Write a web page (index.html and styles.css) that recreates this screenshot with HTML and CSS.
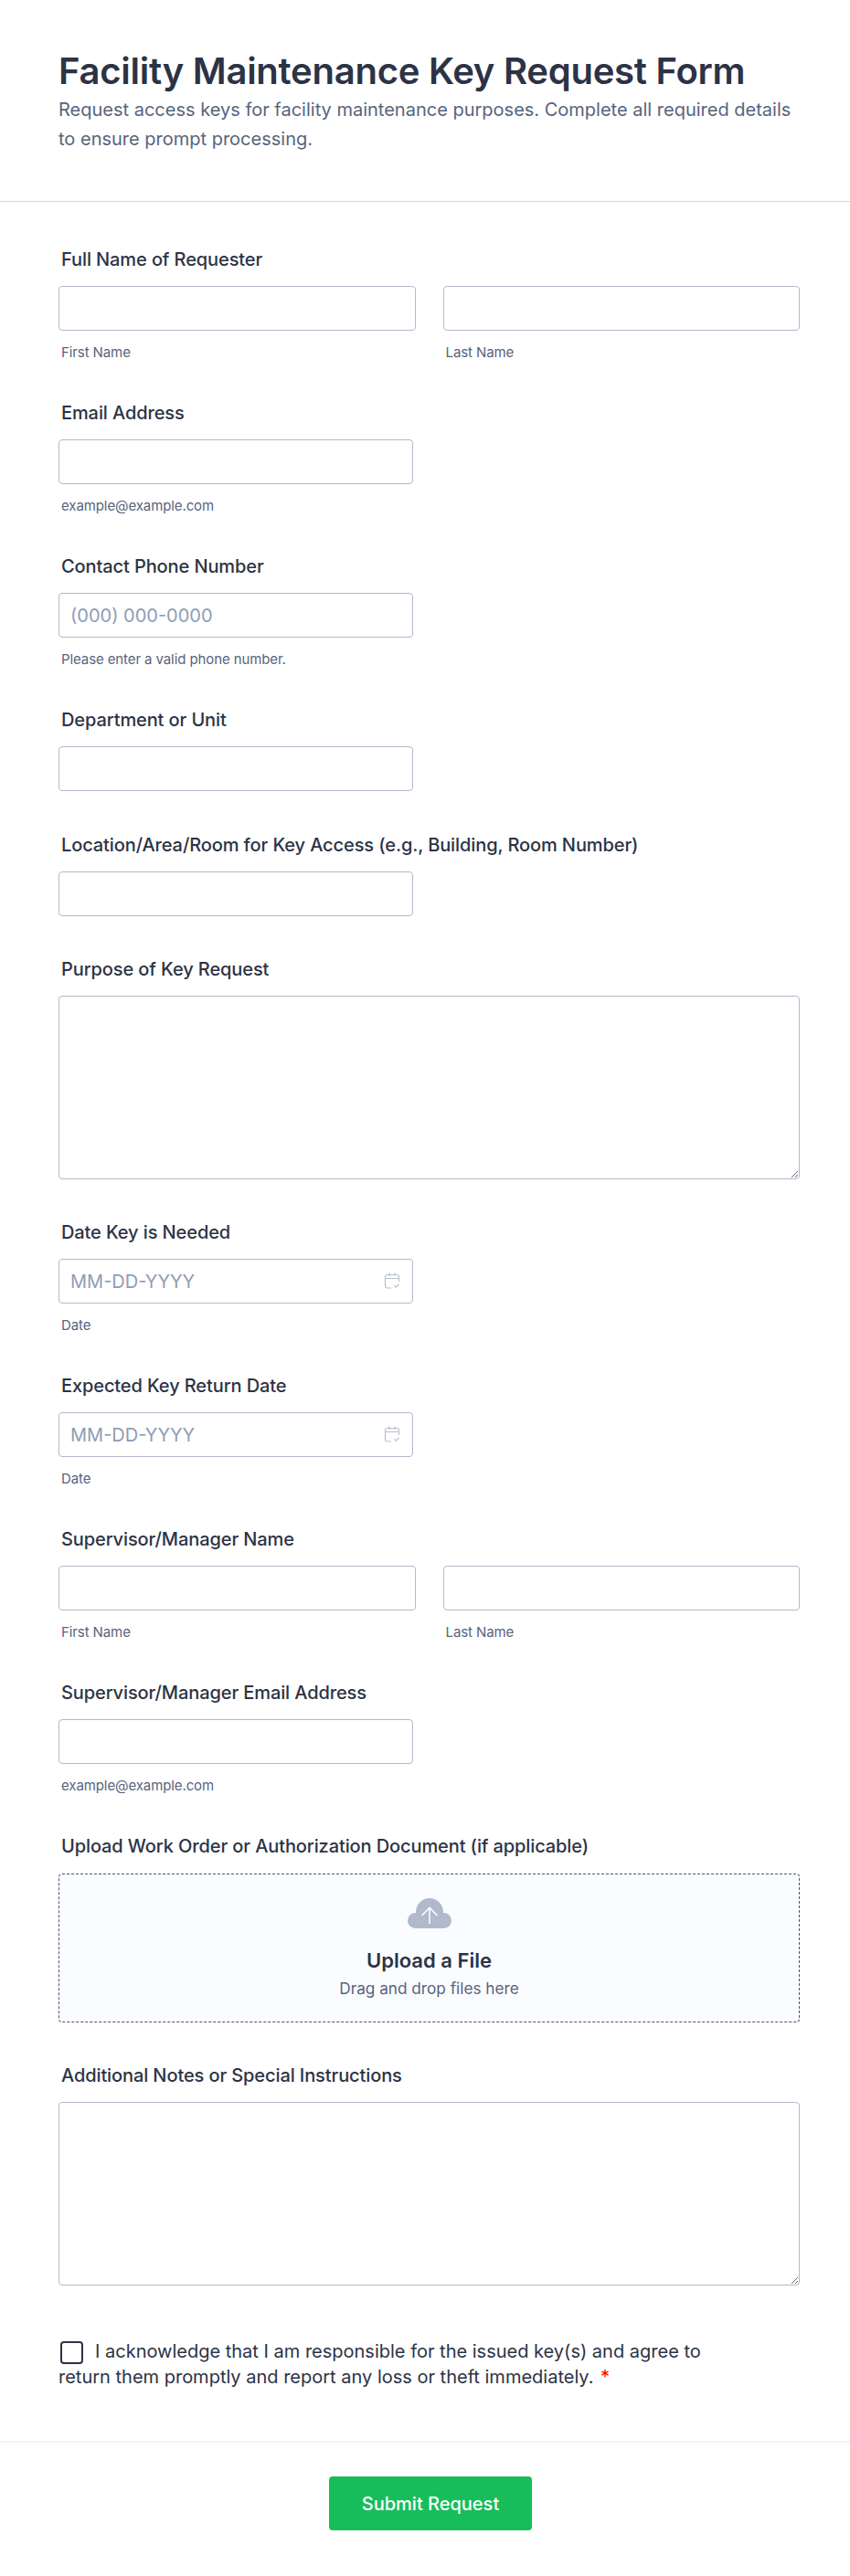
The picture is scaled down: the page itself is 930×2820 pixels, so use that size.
FILE: index.html
```html
<!DOCTYPE html>
<html lang="en">
<head>
  <meta charset="UTF-8">
  <meta name="viewport" content="width=device-width, initial-scale=1.0">
  <title>Facility Maintenance Key Request Form</title>
  <link rel="stylesheet" href="styles.css">
</head>
<body>
  <div class="form">
    <div class="form-header">
      <h1>Facility Maintenance Key Request Form</h1>
      <p>Request access keys for facility maintenance purposes. Complete all required details to ensure prompt processing.</p>
    </div>

    <div class="form-body">
      <div class="field">
        <label>Full Name of Requester</label>
        <div class="row">
          <div class="col">
            <input type="text">
            <span class="sub">First Name</span>
          </div>
          <div class="col">
            <input type="text">
            <span class="sub">Last Name</span>
          </div>
        </div>
      </div>

      <div class="field">
        <label>Email Address</label>
        <input type="text" class="half">
        <span class="sub">example@example.com</span>
      </div>

      <div class="field">
        <label>Contact Phone Number</label>
        <input type="text" class="half" placeholder="(000) 000-0000">
        <span class="sub">Please enter a valid phone number.</span>
      </div>

      <div class="field">
        <label>Department or Unit</label>
        <input type="text" class="half">
      </div>

      <div class="field">
        <label>Location/Area/Room for Key Access (e.g., Building, Room Number)</label>
        <input type="text" class="half">
      </div>

      <div class="field">
        <label>Purpose of Key Request</label>
        <textarea></textarea>
      </div>

      <div class="field">
        <label>Date Key is Needed</label>
        <div class="date half">
          <input type="text" placeholder="MM-DD-YYYY">
          <svg class="cal" width="18" height="18" viewBox="0 0 18 18" fill="none" stroke="#b8bfcf" stroke-width="1.2">
            <path d="M8 17H3.5A2 2 0 0 1 1.5 15V4.5A2 2 0 0 1 3.5 2.5H14.5A2 2 0 0 1 16.5 4.5V10"/>
            <path d="M1.5 6.5H16.5M6 0.5V4M12 0.5V4"/>
            <path d="M11.5 14.5L13.2 16.2L16.5 13"/>
          </svg>
        </div>
        <span class="sub">Date</span>
      </div>

      <div class="field">
        <label>Expected Key Return Date</label>
        <div class="date half">
          <input type="text" placeholder="MM-DD-YYYY">
          <svg class="cal" width="18" height="18" viewBox="0 0 18 18" fill="none" stroke="#b8bfcf" stroke-width="1.2">
            <path d="M8 17H3.5A2 2 0 0 1 1.5 15V4.5A2 2 0 0 1 3.5 2.5H14.5A2 2 0 0 1 16.5 4.5V10"/>
            <path d="M1.5 6.5H16.5M6 0.5V4M12 0.5V4"/>
            <path d="M11.5 14.5L13.2 16.2L16.5 13"/>
          </svg>
        </div>
        <span class="sub">Date</span>
      </div>

      <div class="field">
        <label>Supervisor/Manager Name</label>
        <div class="row">
          <div class="col">
            <input type="text">
            <span class="sub">First Name</span>
          </div>
          <div class="col">
            <input type="text">
            <span class="sub">Last Name</span>
          </div>
        </div>
      </div>

      <div class="field">
        <label>Supervisor/Manager Email Address</label>
        <input type="text" class="half">
        <span class="sub">example@example.com</span>
      </div>

      <div class="field">
        <label>Upload Work Order or Authorization Document (if applicable)</label>
        <div class="upload">
          <svg width="48" height="33" viewBox="0 0 48 33">
            <g fill="#b1bacb">
              <circle cx="24" cy="15" r="15"/>
              <circle cx="8.5" cy="24.5" r="8.5"/>
              <circle cx="39.5" cy="24.5" r="8.5"/>
              <rect x="8" y="20" width="32" height="13"/>
            </g>
            <path fill="none" stroke="#fbfcff" stroke-width="1.6" d="M24 28V10.5M15.5 19L24 10.5L32.5 19"/>
          </svg>
          <strong>Upload a File</strong>
          <span>Drag and drop files here</span>
        </div>
      </div>

      <div class="field">
        <label>Additional Notes or Special Instructions</label>
        <textarea></textarea>
      </div>

      <div class="consent">
        <span class="box"></span>I acknowledge that I am responsible for the issued key(s) and agree to return them promptly and report any loss or theft immediately. <em>*</em>
      </div>
    </div>

    <div class="form-footer">
      <button>Submit Request</button>
    </div>
  </div>
</body>
</html>
```

FILE: styles.css
```css
* {
  box-sizing: border-box;
}
body {
  margin: 0;
  background-color: #fff;
  color: #2c3345;
  font-family: Inter, "Liberation Sans", sans-serif;
}
.form-header {
  height: 221px;
  padding: 52px 64px 0;
  border-bottom: 1px solid #d3d6e2;
}
h1 {
  margin: 0;
  font-size: 40px;
  line-height: 52px;
  font-weight: 600;
  letter-spacing: -0.25px;
}
.form-header p {
  margin: 0;
  max-width: 802px;
  color: #57647e;
  font-size: 20px;
  line-height: 32px;
}
.form-body {
  padding: 51px 55px 0 64px;
}
.field {
  margin-bottom: 46.5px;
}
label {
  display: block;
  height: 24px;
  margin: 0 0 17px 3px;
  font-size: 20px;
  line-height: 24px;
  font-weight: 450;
  letter-spacing: -0.1px;
}
input, textarea {
  display: block;
  width: 100%;
  height: 49px;
  padding: 0 12px;
  border: 1px solid #b4b9c9;
  border-radius: 4px;
  background-color: #fff;
  color: #2c3345;
  font-family: inherit;
  font-size: 20px;
}
input::placeholder {
  color: #8d9db5;
}
textarea {
  height: 200.5px;
}
.half {
  width: 388px;
}
.row {
  display: flex;
  gap: 30px;
}
.col {
  flex: 1;
}
.sub {
  display: block;
  height: 33px;
  margin-bottom: -33px;
  padding: 15px 0 0 3px;
  color: #57647e;
  font-size: 15px;
  line-height: 18px;
  letter-spacing: -0.1px;
}
.field:has(.sub) {
  margin-bottom: 78px;
}
.date {
  position: relative;
}
.cal {
  position: absolute;
  top: 15px;
  right: 14px;
}
.upload {
  display: flex;
  flex-direction: column;
  align-items: center;
  height: 162.5px;
  margin-top: 18px;
  padding-top: 26px;
  border: 1px dashed #4c536f;
  border-radius: 4px;
  background-color: #fbfcff;
}
.upload strong {
  margin-top: 21px;
  font-size: 22px;
  line-height: 28px;
  font-weight: 600;
}
.upload span {
  margin-top: 5px;
  color: #57647e;
  font-size: 17.2px;
  line-height: 24px;
}
.consent {
  max-width: 740px;
  margin-top: 58.5px;
  font-size: 20px;
  line-height: 28px;
}
.box {
  display: inline-block;
  width: 25px;
  height: 25px;
  margin: 0 13px 0 2px;
  border: 2px solid #2c3345;
  border-radius: 4px;
  vertical-align: middle;
}
.consent em {
  margin-left: 2px;
  color: #f00;
  font-style: normal;
}
.form-footer {
  display: flex;
  justify-content: center;
  margin-top: 56px;
  padding: 37px 0 0 12px;
  border-top: 2px solid #f1f3f8;
}
button {
  width: 222px;
  height: 59px;
  border: none;
  border-radius: 4px;
  background-color: #18bd5b;
  color: #fff;
  font-family: inherit;
  font-size: 20px;
  font-weight: 500;
}
```
